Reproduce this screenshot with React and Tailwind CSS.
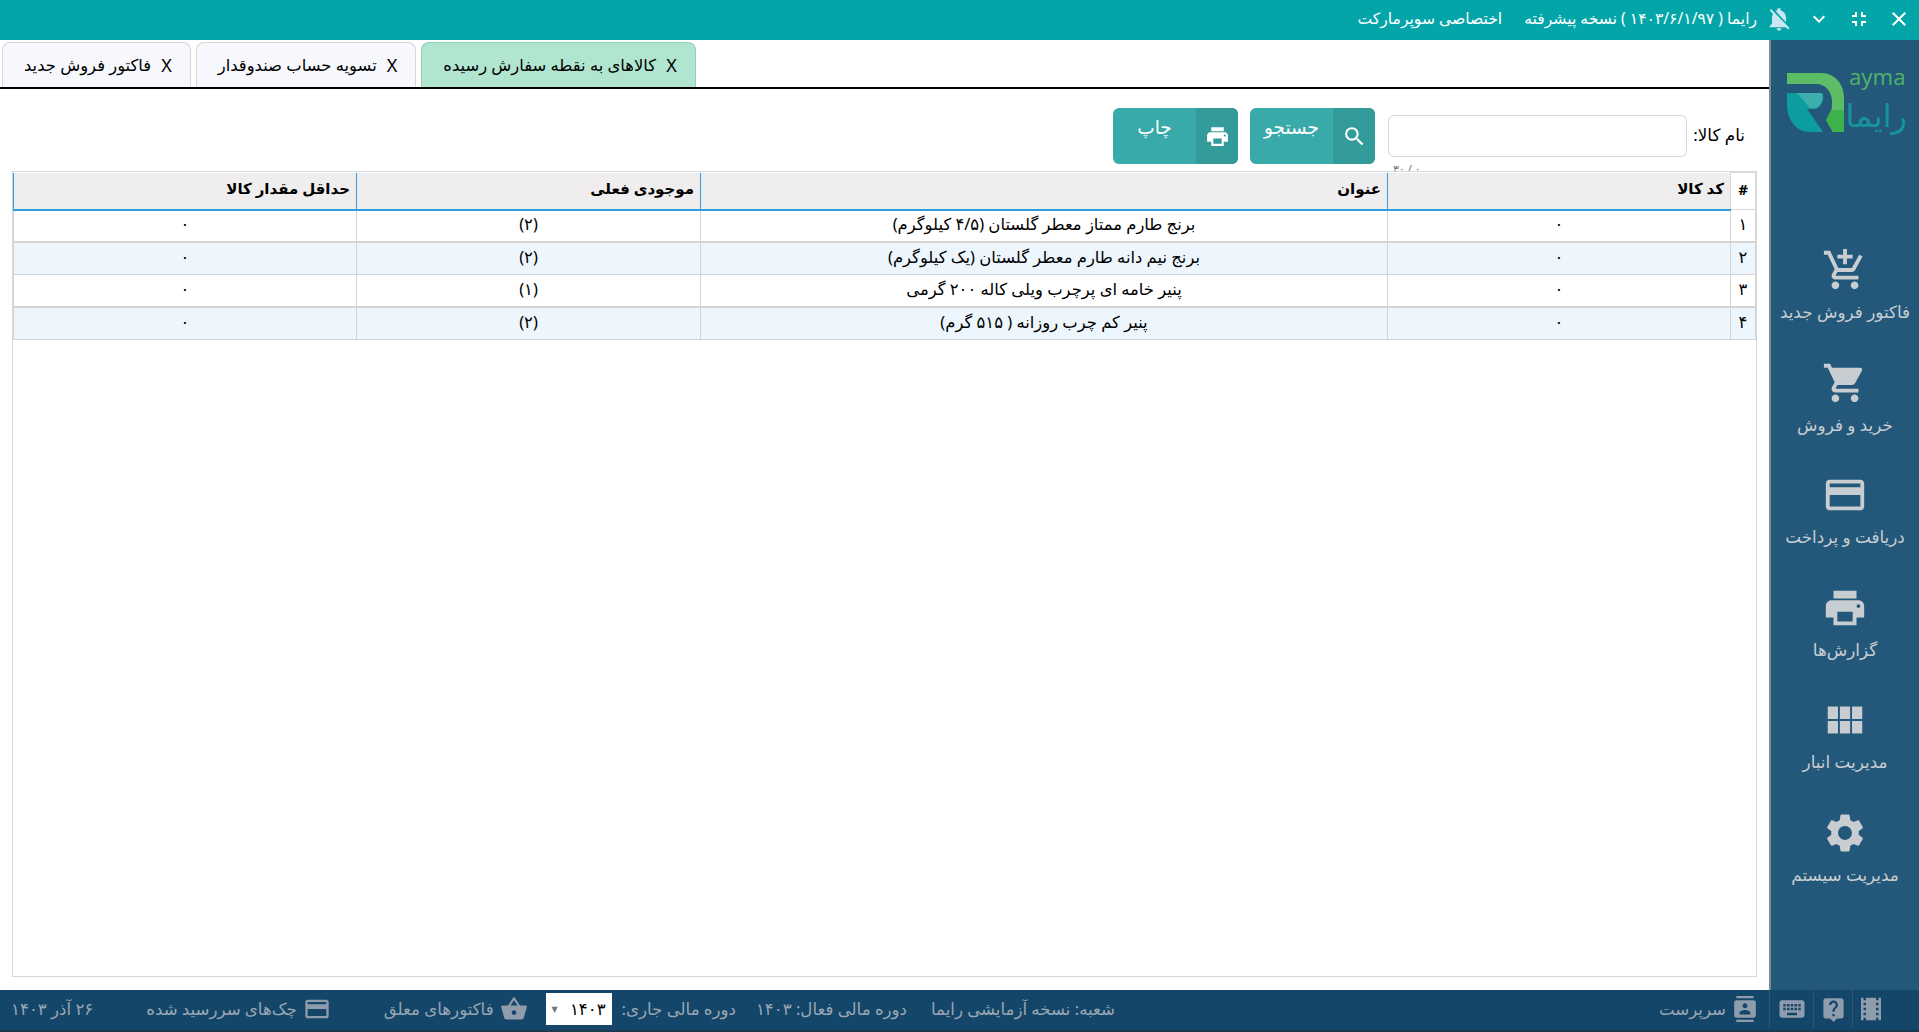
import {
  MdAddShoppingCart,
  MdClose,
  MdContacts,
  MdCreditCard,
  MdExpandMore,
  MdFullscreenExit,
  MdKeyboard,
  MdLiveHelp,
  MdLocalMovies,
  MdNotificationsOff,
  MdPrint,
  MdSearch,
  MdSettings,
  MdShoppingBasket,
  MdShoppingCart,
  MdViewModule,
} from "react-icons/md";

const menuItems = [
  { icon: MdAddShoppingCart, label: "فاکتور فروش جدید" },
  { icon: MdShoppingCart, label: "خرید و فروش" },
  { icon: MdCreditCard, label: "دریافت و پرداخت" },
  { icon: MdPrint, label: "گزارش‌ها" },
  { icon: MdViewModule, label: "مدیریت انبار" },
  { icon: MdSettings, label: "مدیریت سیستم" },
];

const tabs = [
  { label: "کالاهای به نقطه سفارش رسیده", active: true },
  { label: "تسویه حساب صندوقدار" },
  { label: "فاکتور فروش جدید" },
];

const rows = [
  { id: "۱", code: "۰", title: "برنج طارم ممتاز معطر گلستان (۴/۵ کیلوگرم)", stock: "(۲)", min: "۰" },
  { id: "۲", code: "۰", title: "برنج نیم دانه طارم معطر گلستان (یک کیلوگرم)", stock: "(۲)", min: "۰" },
  { id: "۳", code: "۰", title: "پنیر خامه ای پرچرب ویلی کاله ۲۰۰ گرمی", stock: "(۱)", min: "۰" },
  { id: "۴", code: "۰", title: "پنیر کم چرب روزانه ( ۵۱۵ گرم)", stock: "(۲)", min: "۰" },
];

const Logo = () => (
  <svg viewBox="0 0 149 90" className="h-[90px] w-[149px]">
    <path d="M16 13H50C64 13 73 24 73 38V72H62L55 60C60 55 61 50 61 42C61 32 55 24 45 24H16Z" fill="#5cbd66" />
    <path d="M55 60L60 50L73 50V72H62Z" fill="#3bb24a" />
    <path d="M16 33H50C54 33 53 47 44 49H36L52 72H38C26 72 16 60 16 45Z" fill="#0d9d9f" />
    <path d="M26 33H50C53 33 52 46 45 48H39Z" fill="#3caeae" />
    <text x="78" y="25" direction="ltr" fontSize="22" fill="#4fae68">ayma</text>
    <text x="136" y="67" fontSize="32" fill="#15959b">رایما</text>
  </svg>
);

const ActionButton = ({ icon: Icon, label }) => (
  <button className="flex h-14 w-[125px] overflow-hidden rounded-md bg-[#37aaa9] text-white">
    <span className="flex h-full w-[42px] items-center justify-center bg-[#339b99]">
      <Icon size={25} />
    </span>
    <span className="flex-1 pt-[5px] text-center text-[18.5px]">{label}</span>
  </button>
);

const StatusIcon = ({ icon: Icon, size = 28 }) => <Icon size={size} className="shrink-0 text-[#8e9cab]" />;

function App() {
  return (
    <div dir="rtl" className="flex h-screen w-full flex-col overflow-hidden bg-white font-['Noto_Sans','DejaVu_Sans',sans-serif] text-black">
      <header className="flex h-10 shrink-0 items-center bg-[#04a5a9] pb-0.5 text-[15.6px] text-white">
        <div className="flex w-10 justify-center"><MdClose size={24} /></div>
        <div className="flex w-10 justify-center"><MdFullscreenExit size={24} /></div>
        <div className="flex w-10 justify-center"><MdExpandMore size={24} /></div>
        <div className="flex w-10 justify-center"><MdNotificationsOff size={28} className="text-[#c9e6f2]" /></div>
        <span className="mr-0.5">رایما ( ۱۴۰۳/۶/۱/۹۷ ) نسخه پیشرفته</span>
        <span className="mr-[22px]">اختصاصی سوپرمارکت</span>
      </header>

      <div className="flex min-h-0 flex-1">
        <aside className="flex w-[150px] shrink-0 flex-col items-center border-l-2 border-[#7d8b95] bg-[#24587a] text-[#c8cdd1]">
          <div className="mt-5 h-[90px]"><Logo /></div>
          <nav className="mt-[97px] flex flex-col items-center">
            {menuItems.map((item) => (
              <div key={item.label} className="flex h-[112.6px] flex-col items-center">
                <item.icon size={46} />
                <span className="mt-[6px] text-[16.8px]">{item.label}</span>
              </div>
            ))}
          </nav>
        </aside>

        <main className="flex min-w-0 flex-1 flex-col">
          <div className="flex h-[49px] shrink-0 items-end justify-end gap-[5px] border-b-2 border-black pl-0.5">
            {tabs.map((tab) => (
              <div
                key={tab.label}
                className={`flex h-[45px] items-center gap-2.5 rounded-t-lg border border-b-0 pr-[18px] pl-[21px] text-[16.4px] ${
                  tab.active ? "border-[#8fcfb4] bg-[#b0e6cf]" : "border-[#d6d6d6] bg-[#f7f8fd]"
                }`}
              >
                <span className="text-lg">X</span>
                <span>{tab.label}</span>
              </div>
            ))}
          </div>

          <div className="flex h-[82px] shrink-0 gap-2 pt-[26px] pr-6">
            <label className="w-[50px] shrink-0 whitespace-nowrap pt-[7px] text-[16.8px]">نام کالا:</label>
            <div className="h-14 w-[299px] shrink-0 overflow-hidden">
              <div className="h-[42px] rounded-md border border-[#d5d5d5] bg-white"></div>
              <div className="pt-1 pl-[5px] text-left text-[11px] text-[#777777]">۰ / ۳۰</div>
            </div>
            <div className="-mt-[7px] mr-[5px] flex gap-3">
              <ActionButton icon={MdSearch} label="جستجو" />
              <ActionButton icon={MdPrint} label="چاپ" />
            </div>
          </div>

          <div className="mx-3 mb-[13px] min-h-0 flex-1 border border-[#d8d8d8]">
            <table className="w-full table-fixed border-collapse text-center text-[16.4px]">
              <colgroup>
                <col className="w-[25px]" />
                <col className="w-[343px]" />
                <col className="w-[687px]" />
                <col className="w-[344px]" />
                <col />
              </colgroup>
              <thead className="text-[15px]">
                <tr className="h-[37px]">
                  <th className="border border-[#d8d8d8] pb-1 font-bold">#</th>
                  <th className="border-x border-b-2 border-[#2f9fdd] bg-[#efeded] px-1.5 pb-1 text-right font-bold">کد کالا</th>
                  <th className="border-x border-b-2 border-[#2f9fdd] bg-[#efeded] px-1.5 pb-1 text-right font-bold">عنوان</th>
                  <th className="border-x border-b-2 border-[#2f9fdd] bg-[#efeded] px-1.5 pb-1 text-right font-bold">موجودی فعلی</th>
                  <th className="border-x border-b-2 border-[#2f9fdd] bg-[#efeded] px-1.5 pb-1 text-right font-bold">حداقل مقدار کالا</th>
                </tr>
              </thead>
              <tbody>
                {rows.map((row, index) => {
                  const cell = `border border-[#d4d4d4] pb-0.5 ${index % 2 === 0 ? "border-b-2" : ""}`;
                  return (
                    <tr key={row.id} className={`h-[32.4px] ${index % 2 === 1 ? "bg-[#eef6fd]" : "bg-white"}`}>
                      <td className={cell}>{row.id}</td>
                      <td className={cell}>{row.code}</td>
                      <td className={cell}>{row.title}</td>
                      <td className={cell}>{row.stock}</td>
                      <td className={cell}>{row.min}</td>
                    </tr>
                  );
                })}
              </tbody>
            </table>
          </div>
        </main>
      </div>

      <footer className="flex h-[42px] shrink-0 items-center border-b-2 border-[#1b3a4d] bg-[#14466a] pb-0.5 text-[16.6px] text-[#9aa7b3]">
        <div className="flex h-full w-[67px] items-center border-l border-[#31566f] pr-[33px]"><StatusIcon icon={MdLocalMovies} size={30} /></div>
        <div className="flex h-full w-[39px] items-center justify-center border-l border-[#31566f]"><StatusIcon icon={MdLiveHelp} size={27} /></div>
        <div className="flex h-full w-[44px] items-center justify-center border-l border-[#31566f]"><StatusIcon icon={MdKeyboard} size={30} /></div>
        <div className="mr-[11px] flex items-center gap-1.5">
          <StatusIcon icon={MdContacts} size={26} />
          <span>سرپرست</span>
        </div>
        <span className="mr-[544px]">شعبه: نسخه آزمایشی رایما</span>
        <span className="mr-6">دوره مالی فعال: ۱۴۰۳</span>
        <span className="mr-5">دوره مالی جاری:</span>
        <div className="mr-2.5 flex h-8 w-[66px] items-center justify-between bg-white px-1.5 text-black">
          <span>۱۴۰۳</span>
          <span className="text-[8px] text-[#777777]">▼</span>
        </div>
        <div className="mr-[18px] flex items-center gap-1.5">
          <StatusIcon icon={MdShoppingBasket} />
          <span>فاکتورهای معلق</span>
        </div>
        <div className="mr-[53px] flex items-center gap-1.5">
          <StatusIcon icon={MdCreditCard} />
          <span>چک‌های سررسید شده</span>
        </div>
        <span className="mr-[53px]">۲۶ آذر ۱۴۰۳</span>
      </footer>
    </div>
  );
}

export default App;
